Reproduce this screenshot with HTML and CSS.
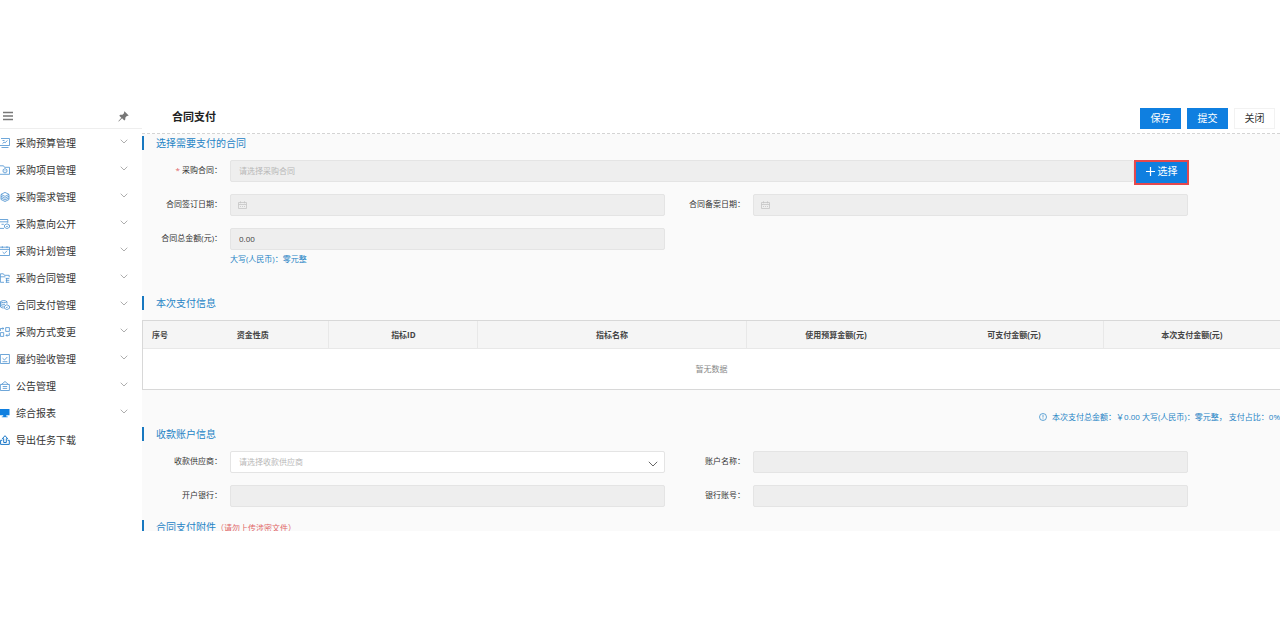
FILE: index.html
```html
<!DOCTYPE html>
<html lang="zh-CN">

<head>
    <meta charset="utf-8">
    <meta name="viewport" content="width=device-width, initial-scale=1">
    <title>合同支付</title>
    <link rel="stylesheet" href="styles.css">
</head>

<body>
    <div class="app">
        <nav class="sidebar">
            <div class="sidebar-top">
                <button class="icon-btn" type="button" aria-label="收起菜单">
                    <svg width="10" height="10" viewBox="0 0 10 10" stroke="#777" stroke-width="1.5"><path d="M0 1.5h10M0 5h10M0 8.5h10" /></svg>
                </button>
                <button class="icon-btn" type="button" aria-label="固定菜单">
                    <svg width="11" height="11" viewBox="0 0 11 11" fill="#777"><path d="M6.4.3l4.3 4.1-1.1.5-.5-.1-1.7 1.8-.2 2.2-.9.7-2.2-2.2L.8 10.6l-.5-.3 3-3.6-2-2 .9-.9 2.3-.1L6.2 2l-.2-.7z" /></svg>
                </button>
            </div>
            <a class="menu-item" href="#">
                <svg class="menu-icon" viewBox="0 0 10 10"><path d="M1 .5h8.500v7H0M1.500 9.500h7M2.500 5.600l1.600-1.500 1 .8 2.300-2.500M2.500 2.500h2" /></svg>
                <span>采购预算管理</span>
                <svg class="arrow" viewBox="0 0 8 5"><path d="M.7.7L4 4 7.3.7" /></svg>
            </a>
            <a class="menu-item" href="#">
                <svg class="menu-icon" viewBox="0 0 10 10"><path d="M0 .8h3.500l1 1.500h5v7H0M5 3.600L6.900 4.700v2.200L5 8 3.100 6.900V4.700zM5 5.300v1" /></svg>
                <span>采购项目管理</span>
                <svg class="arrow" viewBox="0 0 8 5"><path d="M.7.7L4 4 7.3.7" /></svg>
            </a>
            <a class="menu-item" href="#">
                <svg class="menu-icon" viewBox="0 0 10 10"><path d="M5 .4l4 2-4 2-4-2zM1 4.200l4 2 4-2M1 5.900l4 2 4-2M1 7.500l4 2 4-2M9 2.500v5M1 2.500v5" /></svg>
                <span>采购需求管理</span>
                <svg class="arrow" viewBox="0 0 8 5"><path d="M.7.7L4 4 7.3.7" /></svg>
            </a>
            <a class="menu-item" href="#">
                <svg class="menu-icon" viewBox="0 0 10 10"><path d="M0 .5h7.800v3.300M0 2.800h7.800M0 9.400h4M1.500 5.300h2.300M7 4.800l2.500 1.300v2.200L7 9.600 4.500 8.300V6.100zM6.200 7.200l.8.7 1.100-1.200" /></svg>
                <span>采购意向公开</span>
                <svg class="arrow" viewBox="0 0 8 5"><path d="M.7.7L4 4 7.3.7" /></svg>
            </a>
            <a class="menu-item" href="#">
                <svg class="menu-icon" viewBox="0 0 10 10"><path d="M0 1.200h9.500v8.300H0M0 3.400h9.500M2.300.2v1.900M7 .2v1.900M2.600 6l1.700 1.600L7 4.800" /></svg>
                <span>采购计划管理</span>
                <svg class="arrow" viewBox="0 0 8 5"><path d="M.7.7L4 4 7.3.7" /></svg>
            </a>
            <a class="menu-item" href="#">
                <svg class="menu-icon" viewBox="0 0 10 10"><path d="M4 9.300H.4V.8h3l1 1.500h4.800v1.900M.4 3.800h5M5.700 5.400h3.600M5.700 7.300h3.600M5.700 9.300h3.600M6.600 5.200v4.200" /></svg>
                <span>采购合同管理</span>
                <svg class="arrow" viewBox="0 0 8 5"><path d="M.7.7L4 4 7.3.7" /></svg>
            </a>
            <a class="menu-item" href="#">
                <svg class="menu-icon" viewBox="0 0 10 10"><path d="M.5 1.700C2 .2 5.500.2 7 1.700v2M.5 1.700C2 3 5.500 3 7 1.700M.5 1.700v5.300c1 .8 2 1 3.200 1M.5 3.500c1 .9 3 1.100 4.500.8M.5 5.300c1 .8 2 1 3.200.9M6.900 4.700l2.600 1.400v2.200L6.900 9.600 4.400 8.300V6.100zM5.900 7l.9.8L8 6.500" /></svg>
                <span>合同支付管理</span>
                <svg class="arrow" viewBox="0 0 8 5"><path d="M.7.7L4 4 7.3.7" /></svg>
            </a>
            <a class="menu-item" href="#">
                <svg class="menu-icon" viewBox="0 0 10 10"><path d="M.4 5.600h3.300v3.800H.4zM5.700.6h3.700v3.800H5.700zM.4 4V1.500h3.300M2.500.3l1.300 1.200-1.300 1.200M9.300 5.700v2.700H6M7.200 7.200L6 8.400l1.200 1.200" /></svg>
                <span>采购方式变更</span>
                <svg class="arrow" viewBox="0 0 8 5"><path d="M.7.7L4 4 7.3.7" /></svg>
            </a>
            <a class="menu-item" href="#">
                <svg class="menu-icon" viewBox="0 0 10 10"><path d="M.4.5h9v9h-9zM2.500 4.200l2 1.800L7.300 3M2.500 7.700h4.800" /></svg>
                <span>履约验收管理</span>
                <svg class="arrow" viewBox="0 0 8 5"><path d="M.7.7L4 4 7.3.7" /></svg>
            </a>
            <a class="menu-item" href="#">
                <svg class="menu-icon" viewBox="0 0 10 10"><path d="M.4 3.400h9v6.100h-9zM1.500 3.400L5 .5l3.400 2.900M2.700 5.500h4.500M2.700 7.400h4.500" /></svg>
                <span>公告管理</span>
                <svg class="arrow" viewBox="0 0 8 5"><path d="M.7.7L4 4 7.3.7" /></svg>
            </a>
            <a class="menu-item" href="#">
                <svg class="menu-icon solid" viewBox="0 0 10 10"><path d="M0 1h9.500v6.200H6.300v1.200h1.400v.9H1.800v-.9h1.400V7.200H0z" /></svg>
                <span>综合报表</span>
                <svg class="arrow" viewBox="0 0 8 5"><path d="M.7.7L4 4 7.3.7" /></svg>
            </a>
            <a class="menu-item" href="#">
                <svg class="menu-icon bold" viewBox="0 0 10 10"><path d="M2.300 5.300H.6v4.100h8.700V5.300H7.600M3.700 7.500V3.700H2.300L5 .7l2.700 3H6.300v3.800z" /></svg>
                <span>导出任务下载</span>
            </a>
        </nav>

        <main class="main">
            <header class="page-head">
                <h1>合同支付</h1>
                <div class="actions">
                    <button class="btn primary" type="button">保存</button>
                    <button class="btn primary" type="button">提交</button>
                    <button class="btn" type="button">关闭</button>
                </div>
            </header>

            <section class="block contract">
                <h2>选择需要支付的合同</h2>
                <div class="form">
                    <label for="contract"><i>*</i> 采购合同：</label>
                    <div class="field wide">
                        <input id="contract" type="text" placeholder="请选择采购合同" disabled>
                        <button class="btn primary pick" type="button">
                            <svg width="9" height="9" viewBox="0 0 9 9" stroke="#fff" stroke-width="1.2"><path d="M0 4.500h9M4.500 0v9" /></svg>
                            选择
                        </button>
                    </div>
                    <label for="sign-date">合同签订日期：</label>
                    <div class="field">
                        <input id="sign-date" type="text" disabled>
                        <svg class="calendar" viewBox="0 0 9 8"><path d="M.5 1.500h8v6h-8zM.5 3.500h8M2.500.3v2M6.500.3v2M2 5.500h1M4 5.500h1M6 5.500h1" /></svg>
                    </div>
                    <label for="record-date">合同备案日期：</label>
                    <div class="field">
                        <input id="record-date" type="text" disabled>
                        <svg class="calendar" viewBox="0 0 9 8"><path d="M.5 1.500h8v6h-8zM.5 3.500h8M2.500.3v2M6.500.3v2M2 5.500h1M4 5.500h1M6 5.500h1" /></svg>
                    </div>
                    <label for="total">合同总金额(元)：</label>
                    <div class="field">
                        <input id="total" type="text" value="0.00" disabled>
                    </div>
                </div>
                <p class="hint">大写(人民币)：零元整</p>
            </section>

            <section class="block">
                <h2>本次支付信息</h2>
                <table class="pay-table">
                    <colgroup>
                        <col class="c-no">
                        <col class="c-kind">
                        <col class="c-id">
                        <col class="c-name">
                        <col class="c-money">
                        <col class="c-money">
                        <col>
                    </colgroup>
                    <thead>
                        <tr>
                            <th>序号</th>
                            <th class="line">资金性质</th>
                            <th class="line">指标ID</th>
                            <th class="line">指标名称</th>
                            <th>使用预算金额(元)</th>
                            <th class="line">可支付金额(元)</th>
                            <th>本次支付金额(元)</th>
                        </tr>
                    </thead>
                    <tbody>
                        <tr>
                            <td colspan="7">暂无数据</td>
                        </tr>
                    </tbody>
                </table>
                <p class="summary">
                    <svg width="8" height="8" viewBox="0 0 8 8"><circle cx="4" cy="4" r="3.500" /><path d="M4 1.800v2.800M4 5.400v.8" /></svg>
                    <span>本次支付总金额：￥0.00 大写(人民币)：零元整， 支付占比：0%</span>
                </p>
            </section>

            <section class="block">
                <h2>收款账户信息</h2>
                <div class="form">
                    <label for="supplier">收款供应商：</label>
                    <div class="field">
                        <select id="supplier">
                            <option>请选择收款供应商</option>
                        </select>
                        <svg class="select-arrow" viewBox="0 0 10 6"><path d="M.8.8L5 5 9.200.8" /></svg>
                    </div>
                    <label for="account-name">账户名称：</label>
                    <div class="field">
                        <input id="account-name" type="text" disabled>
                    </div>
                    <label for="bank">开户银行：</label>
                    <div class="field">
                        <input id="bank" type="text" disabled>
                    </div>
                    <label for="account-no">银行账号：</label>
                    <div class="field">
                        <input id="account-no" type="text" disabled>
                    </div>
                </div>
            </section>

            <section class="block files">
                <h2>合同支付附件<small>（请勿上传涉密文件）</small></h2>
            </section>
        </main>
    </div>
</body>

</html>
```
FILE: styles.css
```css
* {
    box-sizing: border-box;
}

body {
    margin: 0;
    padding: 108px 0;
    background: #fff;
    color: #333;
    font-family: "Open Sans", "Noto Sans CJK SC", sans-serif;
    font-size: 8px;
    line-height: 16px;
}

h1,
h2,
p {
    margin: 0;
}

button,
input,
select {
    font: inherit;
    color: inherit;
}

.app {
    display: flex;
    height: calc(100vh - 216px);
    overflow: hidden;
}

/* sidebar */
.sidebar {
    flex: 0 0 142px;
    background: #fff;
}

.sidebar-top {
    display: flex;
    justify-content: space-between;
    align-items: center;
    height: 21px;
    padding: 0 13px 4px 3px;
    border-bottom: 1px solid #eee;
}

.icon-btn {
    display: flex;
    padding: 0;
    border: 0;
    background: none;
}

.menu-item {
    display: flex;
    align-items: center;
    height: 27px;
    padding-right: 14px;
    color: #333;
    font-size: 10px;
    text-decoration: none;
}

.menu-icon {
    flex: none;
    width: 10px;
    height: 10px;
    margin-right: 6px;
    fill: none;
    stroke: #4a90cf;
    stroke-width: 0.8;
}

.menu-icon.solid {
    fill: #0f7fe0;
    stroke: none;
}

.menu-icon.bold {
    stroke: #1c78c8;
    stroke-width: 1;
}

.arrow {
    width: 8px;
    height: 5px;
    margin: 0 0 3px auto;
    fill: none;
    stroke: #999;
    stroke-width: 0.8;
}

/* main */
.main {
    flex: 1;
    min-width: 0;
    overflow: hidden;
    background: #fafafa;
}

.page-head {
    display: flex;
    justify-content: space-between;
    height: 26px;
    padding: 0 5px 0 30px;
    background: #fff;
    border-bottom: 1px dashed #d4d4d4;
}

.page-head h1 {
    font-size: 11px;
    line-height: 18px;
    color: #222;
}

.actions {
    display: flex;
    gap: 6px;
}

.btn {
    width: 41px;
    height: 21px;
    padding: 0 0 2px;
    border: 1px solid #f2f2f2;
    background: #fff;
    font-size: 10px;
    line-height: 16px;
}

.btn.primary {
    border-color: #0f7fe0;
    background: #0f7fe0;
    color: #fff;
}

.block {
    padding-top: 2px;
}

.block h2 {
    margin-bottom: 10px;
    padding-left: 12px;
    border-left: 2px solid #1878c0;
    color: #2583c5;
    font-size: 10px;
    font-weight: normal;
    line-height: 14px;
}

.block h2 small {
    color: #e06666;
    font-size: 8px;
}

.form {
    display: grid;
    grid-template-columns: 88px 1fr 88px 1fr;
    row-gap: 12px;
    padding-right: 92px;
}

.form label {
    padding-right: 8px;
    text-align: right;
    line-height: 20px;
}

.form label i {
    color: #e06666;
    font-style: normal;
}

.field {
    position: relative;
    display: flex;
    height: 22px;
}

.field.wide {
    grid-column: 2 / 5;
}

.field input,
.field select {
    flex: 1;
    min-width: 0;
    padding: 0 8px;
    border: 1px solid #e4e4e4;
    border-radius: 2px;
    background: #fff;
}

.field input:disabled {
    background: #eee;
    color: #444;
}

.field input::placeholder,
.field select {
    color: #b8b8b8;
}

.field select {
    appearance: none;
}

.field .pick {
    display: flex;
    justify-content: center;
    align-items: center;
    gap: 3px;
    width: 55px;
    height: 25px;
    margin-right: -1px;
    padding-bottom: 3px;
    border: 2px solid #e5484d;
}

.calendar {
    position: absolute;
    left: 8px;
    top: 7px;
    width: 9px;
    height: 8px;
    fill: none;
    stroke: #c4c4c4;
    stroke-width: 0.8;
}

.select-arrow {
    position: absolute;
    right: 7px;
    top: 10px;
    width: 10px;
    height: 6px;
    fill: none;
    stroke: #666;
}

.hint {
    padding: 1px 0 0 88px;
    color: #2583c5;
}

.contract {
    padding-bottom: 27px;
}

/* table */
.pay-table {
    width: 100%;
    table-layout: fixed;
    border-collapse: separate;
    border-spacing: 0;
    border: 1px solid #d8d8d8;
    border-right: 0;
    background: #fff;
}

.c-no {
    width: 3%;
}

.c-kind {
    width: 13.4%;
}

.c-id {
    width: 13.1%;
}

.c-name {
    width: 23.6%;
}

.c-money {
    width: 15.7%;
}

.pay-table th {
    height: 28px;
    padding: 0;
    border-bottom: 1px solid #e8e8e8;
    background: #f5f5f5;
    color: #444;
    white-space: nowrap;
}

.pay-table th.line {
    border-right: 1px solid #e8e8e8;
}

.pay-table td {
    height: 40px;
    padding: 0;
    color: #888;
    text-align: center;
}

.summary {
    display: flex;
    justify-content: flex-end;
    align-items: center;
    gap: 5px;
    margin-top: 19px;
    color: #2583c5;
    white-space: nowrap;
}

.summary svg {
    fill: none;
    stroke: #2583c5;
    stroke-width: 0.7;
}

.files {
    padding-top: 13px;
}
```
